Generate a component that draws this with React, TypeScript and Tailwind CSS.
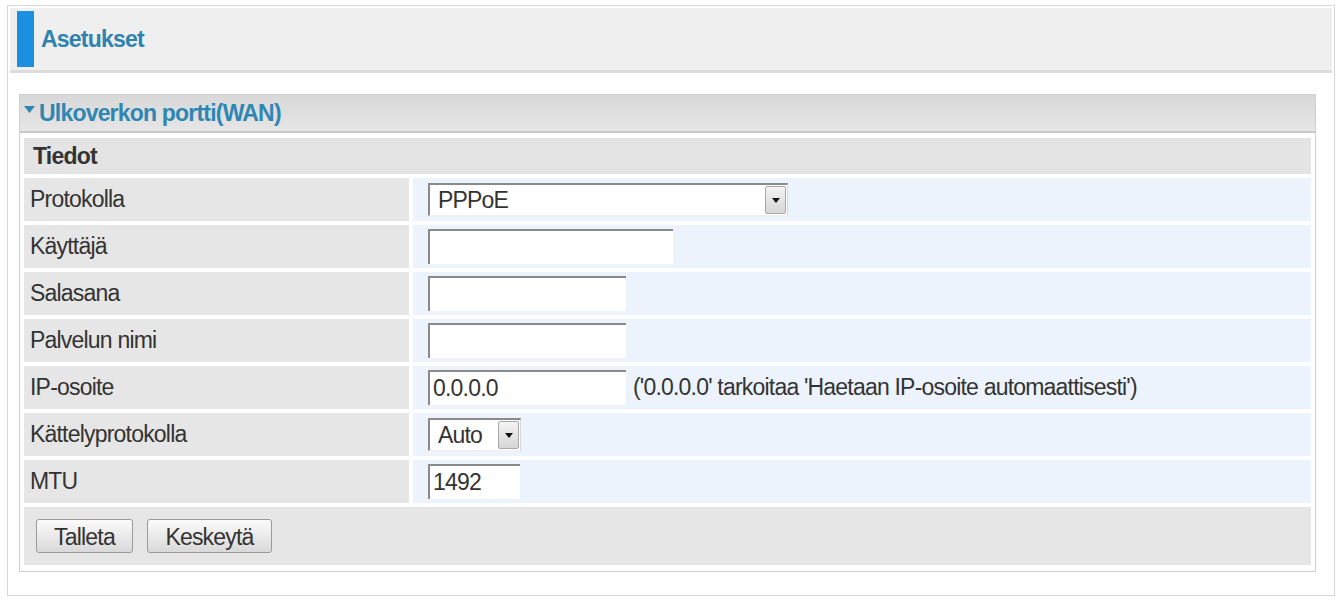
import React from "react";

type Field = {
  label: string;
  kind: "select" | "input";
  value?: string;
  width: string;
  note?: string;
};

const fields: Field[] = [
  { label: "Protokolla", kind: "select", value: "PPPoE", width: "w-[360px]" },
  { label: "Käyttäjä", kind: "input", width: "w-[245px]" },
  { label: "Salasana", kind: "input", width: "w-[198px]" },
  { label: "Palvelun nimi", kind: "input", width: "w-[198px]" },
  {
    label: "IP-osoite",
    kind: "input",
    value: "0.0.0.0",
    width: "w-[198px]",
    note: "('0.0.0.0' tarkoitaa 'Haetaan IP-osoite automaattisesti')",
  },
  { label: "Kättelyprotokolla", kind: "select", value: "Auto", width: "w-[93px]" },
  { label: "MTU", kind: "input", value: "1492", width: "w-[92px]" },
];

function SelectBox({ value, width }: { value?: string; width: string }) {
  return (
    <div
      className={`${width} flex h-[33px] items-center justify-between border-t-2 border-l-2 border-r border-b border-t-[#8a8a8a] border-l-[#8a8a8a] border-r-[#d8d8d8] border-b-[#f0f0f0] bg-white`}
    >
      <span className="pl-[8px] text-[#333]">{value}</span>
      <span className="mr-[1px] flex h-[28px] w-[21px] items-center justify-center rounded-[2px] border border-[#a8a8a8] bg-gradient-to-b from-[#f4f4f4] to-[#d6d6d6]">
        <svg width="8" height="5" viewBox="0 0 8 5">
          <path d="M0 0h8L4 5z" fill="#111" />
        </svg>
      </span>
    </div>
  );
}

function TextBox({ value, width }: { value?: string; width: string }) {
  return (
    <div
      className={`${width} flex h-[35px] items-center border-t-2 border-l-2 border-t-[#8a8a8a] border-l-[#8a8a8a] bg-white pl-[3px] text-[#333]`}
    >
      {value}
    </div>
  );
}

export default function App() {
  return (
    <div
      className="h-[600px] w-[1340px] overflow-hidden bg-white pt-[5px] pl-[7px] pr-[5px] text-[23px] tracking-[-0.8px] text-[#333]"
      style={{ fontFamily: '"Liberation Sans", Arial, sans-serif' }}
    >
      <div className="h-[591px] border border-[#d6d6d6] p-[2px]">
        {/* page heading */}
        <div className="flex h-[62px] items-center bg-[#efefef]">
          <span className="ml-[7px] h-[56px] w-[17px] bg-[#1c8fdf]" />
          <span className="ml-[7px] font-bold text-[#2e82ad]">Asetukset</span>
        </div>
        <div className="h-[3px] bg-[#dcdcdc]" />

        {/* WAN panel */}
        <div className="mt-[21px] ml-[9px] mr-[16px] border border-[#cfcfcf] bg-white">
          <div className="flex h-[38px] items-center gap-[4px] border-b-2 border-[#c8c8c8] bg-gradient-to-b from-[#d8d8d8] to-[#e6e6e6] pl-[4px] font-bold text-[#2e86b3]">
            <svg width="11" height="7" viewBox="0 0 11 7" className="-mt-[8px]">
              <path d="M0 0h11L5.5 7z" fill="#2e86b3" />
            </svg>
            Ulkoverkon portti(WAN)
          </div>

          <div className="flex flex-col gap-[4px] px-[4px] pt-[5px] pb-[6px]">
            <div className="flex h-[36px] items-center bg-[#e4e4e4] pl-[9px] font-bold text-[#333]">
              Tiedot
            </div>

            {fields.map((f) => (
              <div key={f.label} className="grid h-[43px] grid-cols-[385px_1fr] gap-[4px]">
                <div className="flex items-center bg-[#e6e6e6] pl-[6px]">{f.label}</div>
                <div className="flex items-center bg-[#edf3fc] pl-[15px]">
                  {f.kind === "select" ? (
                    <SelectBox value={f.value} width={f.width} />
                  ) : (
                    <TextBox value={f.value} width={f.width} />
                  )}
                  {f.note ? <span className="ml-[7px] text-[#333]">{f.note}</span> : null}
                </div>
              </div>
            ))}

            <div className="flex h-[58px] items-center gap-[14px] bg-[#e6e6e6] pl-[12px]">
              <button className="h-[34px] w-[97px] rounded-[3px] border border-[#9a9a9a] bg-gradient-to-b from-[#fbfbfb] to-[#d9d9d9] text-[#333]">
                Talleta
              </button>
              <button className="h-[34px] w-[125px] rounded-[3px] border border-[#9a9a9a] bg-gradient-to-b from-[#fbfbfb] to-[#d9d9d9] text-[#333]">
                Keskeytä
              </button>
            </div>
          </div>
        </div>
      </div>
    </div>
  );
}
